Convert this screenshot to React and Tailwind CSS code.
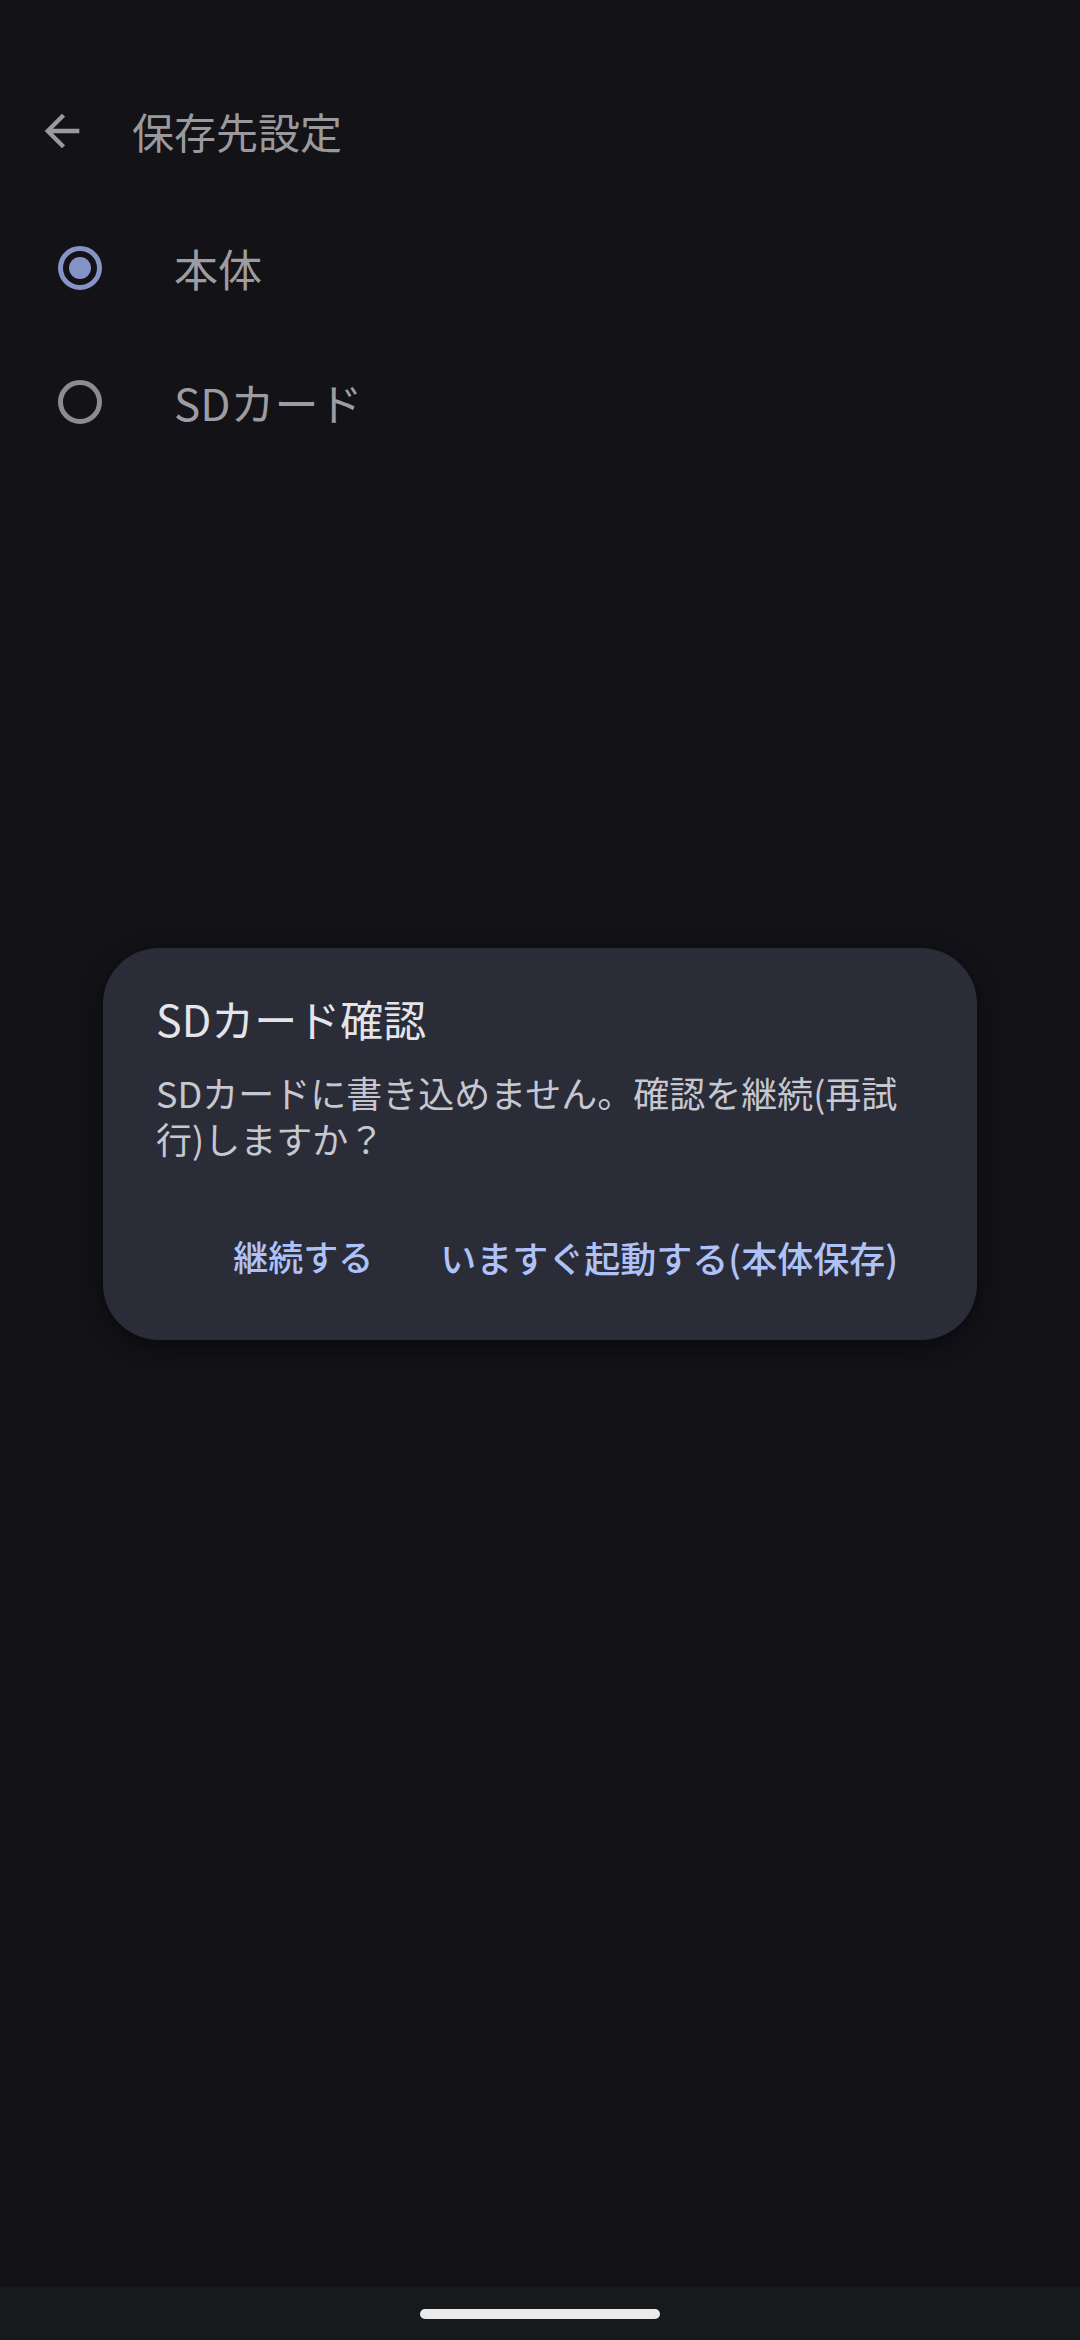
import React from "react";

function Radio({ checked }) {
  return checked ? (
    <div className="w-[44px] h-[44px] rounded-full border-[5px] border-[#8593c6] flex items-center justify-center shrink-0">
      <div className="w-[22px] h-[22px] rounded-full bg-[#8593c6]" />
    </div>
  ) : (
    <div className="w-[44px] h-[44px] rounded-full border-[5px] border-[#8c8c90] shrink-0" />
  );
}

export default function App() {
  return (
    <div className="relative w-[1080px] h-[2340px] bg-[#121217] flex flex-col font-['Noto_Sans_CJK_JP','Noto_Sans',sans-serif] overflow-hidden">
      <div className="flex-1 flex flex-col">
        <div className="mt-[105px] h-[52px] flex items-center">
          <svg className="ml-[36px] w-[52px] h-[52px] shrink-0" viewBox="0 0 24 24" fill="#9a9a9e">
            <path d="M20 11H7.83l5.59-5.59L12 4l-8 8 8 8 1.41-1.41L7.83 13H20v-2z" />
          </svg>
          <span className="ml-[44px] text-[42px] leading-[52px] text-[#9a9a9e]">保存先設定</span>
        </div>
        <div className="mt-[44px] flex flex-col">
          <div className="h-[134px] flex items-center pl-[58px]">
            <Radio checked />
            <span className="ml-[72px] text-[44px] leading-[52px] text-[#9d9da1]">本体</span>
          </div>
          <div className="h-[134px] flex items-center pl-[58px]">
            <Radio />
            <span className="ml-[72px] text-[44px] leading-[52px] text-[#9d9da1]">SDカード</span>
          </div>
        </div>
      </div>
      <div className="h-[53px] bg-[#161a1d] flex items-center justify-center">
        <div className="w-[240px] h-[10px] rounded-full bg-[#ebebeb]" />
      </div>

      <div className="absolute inset-x-0 top-0 bottom-[53px] flex items-center justify-center">
        <div className="w-[874px] rounded-[56px] bg-[#2a2c37] pl-[53px] pr-[54px] pt-[42px] pb-[43px] shadow-[0_6px_24px_rgba(0,0,0,0.45)]">
          <div className="text-[43px] leading-[56px] text-[#e4e4ea]">SDカード確認</div>
          <div className="mt-[23px] text-[36px] leading-[46px] text-[#c6c7d0]">
            <div>SDカードに書き込めません。確認を継続(再試</div>
            <div>行)しますか？</div>
          </div>
          <div className="mt-[56px] flex justify-end gap-[19px]">
            <div className="h-[80px] px-[24px] flex items-center text-[35px] font-medium text-[#afc2f8]">継続する</div>
            <div className="h-[80px] pl-[24px] pr-[25px] flex items-center text-[36px] font-medium text-[#afc2f8]">いますぐ起動する(本体保存)</div>
          </div>
        </div>
      </div>
    </div>
  );
}
